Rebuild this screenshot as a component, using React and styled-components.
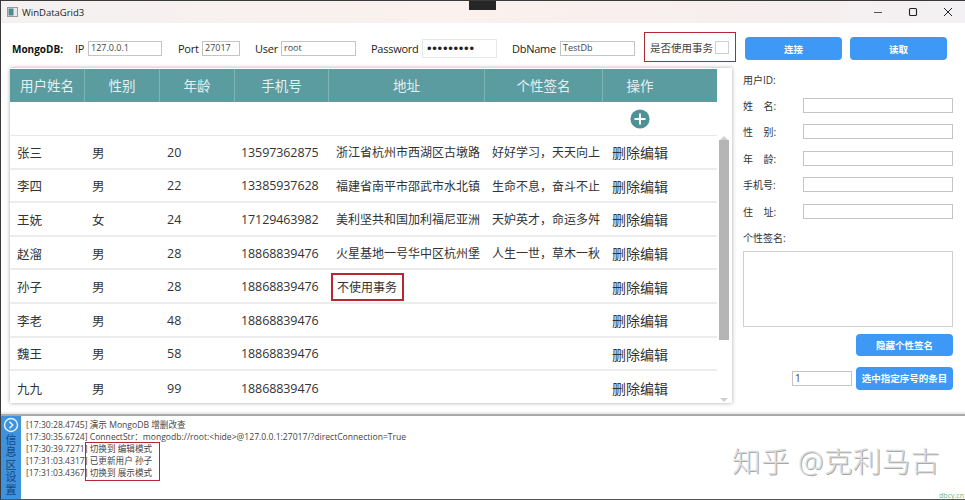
import React from "react";
import styled, { createGlobalStyle } from "styled-components";

const font = `"Open Sans", "Noto Sans CJK SC", "Noto Sans", sans-serif`;

const Global = createGlobalStyle`
  html, body { margin: 0; padding: 0; background: #fff; }
  * { box-sizing: border-box; }
  body { font-family: ${font}; color: #333; }
`;

const Win = styled.div`
  position: relative;
  width: 965px;
  height: 500px;
  overflow: hidden;
  background: #fff;
  border-top: 1px solid #3a3a3a;
  border-left: 1px solid #3a3a3a;
  border-bottom: 1px solid #555;
  display: flex;
  flex-direction: column;
`;
const Notch = styled.div`
  position: absolute;
  left: 468px;
  top: -1px;
  width: 27px;
  height: 10px;
  background: #262626;
`;
const TitleBar = styled.div`
  height: 22px;
  flex: none;
  display: flex;
  align-items: center;
  padding-left: 6px;
  background: linear-gradient(90deg, #f3f1f1, #fbf1ee 45%, #f7eeee 75%, #f3f1f3);
`;
const TitleText = styled.span`
  font-size: 9.5px;
  margin-left: 4px;
  color: #222;
`;
const Controls = styled.div`
  margin-left: auto;
  display: flex;
  align-items: center;
  gap: 25px;
  padding-right: 12px;
`;
const Toolbar = styled.div`
  height: 45px;
  flex: none;
  display: flex;
  align-items: center;
  padding: 6px 0 0 11px;
  font-size: 11px;
  letter-spacing: -0.25px;
  color: #222;
`;
const Brand = styled.b`
  font-size: 10px;
  font-weight: 700;
  letter-spacing: 0;
  width: 63px;
  color: #111;
`;
const Field = styled.label`
  display: flex;
  align-items: center;
  margin-right: ${p => p.$mr || 15}px;
`;
const FieldName = styled.span`
  width: ${p => p.$w}px;
  white-space: nowrap;
`;
const TextBox = styled.div`
  width: ${p => p.$w}px;
  height: ${p => p.$h || 15}px;
  border: 1px solid ${p => p.$soft ? "#e6e6e6" : "#c4c4c4"};
  background: #fff;
  font-size: ${p => p.$fs || 9}px;
  letter-spacing: 0;
  line-height: 12px;
  padding-left: 2px;
  color: #444;
  display: flex;
  align-items: ${p => p.$center ? "center" : "flex-start"};
  overflow: hidden;
`;
const Dots = styled.span`
  font-family: "Liberation Sans", sans-serif;
  font-size: 13px;
  letter-spacing: 0.75px;
  padding-left: 2px;
  color: #222;
`;
const TxBox = styled.div`
  width: 92px;
  height: 30px;
  margin: 0 9px 3px -6px;
  border: 1.5px solid #b02a30;
  display: flex;
  align-items: center;
  padding-left: 5px;
  gap: 2px;
  font-size: 10.5px;
  letter-spacing: 0;
  white-space: nowrap;
  color: #444;
`;
const Check = styled.span`
  width: 14px;
  height: 13px;
  flex: none;
  border: 1px solid #cfcfcf;
  background: #fff;
`;
const PrimaryBtn = styled.button`
  width: ${p => p.$w || 97}px;
  height: ${p => p.$h || 23}px;
  margin-right: ${p => p.$mr || 0}px;
  border: 0;
  padding: 0;
  border-radius: 4px;
  background: #3e98f5;
  color: #fff;
  font-family: ${font};
  font-size: 9.5px;
  font-weight: 700;
`;
const Main = styled.div`
  flex: none;
  height: 346px;
  display: flex;
  align-items: flex-start;
  padding-left: 9px;
`;
const Card = styled.div`
  width: 722px;
  height: 335px;
  display: flex;
  background: #fff;
  box-shadow: 0 0 4px rgba(0,0,0,.35);
  padding-top: 1px;
`;
const TableArea = styled.div`
  width: 707px;
`;
const columns = "75px 75px 75px 94px 156px 118px 114px";
const Head = styled.div`
  display: grid;
  grid-template-columns: ${columns};
  height: 33px;
  background: #5b9ca0;
`;
const HeadCell = styled.div`
  display: flex;
  align-items: center;
  justify-content: center;
  padding-bottom: 2px;
  font-size: 13.5px;
  color: #e4f0f0;
  border-right: 1px solid #7fb3b6;
  &:last-child { border-right: 0; padding-right: 40px; }
`;
const AddRow = styled.div`
  height: 34px;
  border-bottom: 1px solid #e8e8e8;
  display: grid;
  grid-template-columns: ${columns};
`;
const AddCell = styled.div`
  grid-column: 7;
  display: flex;
  justify-content: center;
  align-items: center;
  padding-right: 40px;
`;
const Row = styled.div`
  display: grid;
  grid-template-columns: ${columns};
  height: 33.6px;
  padding-top: 1px;
  border-bottom: 2px solid #ececec;
  align-items: center;
  &:last-child { border-bottom: 0; }
`;
const Cell = styled.div`
  padding-left: 7px;
  font-size: ${p => p.$fs || 12.5}px;
  white-space: nowrap;
  color: #333;
`;
const PhoneCell = styled(Cell)`
  padding-left: 6px;
  letter-spacing: -0.1px;
`;
const Flagged = styled.span`
  display: inline-block;
  margin: 0 0 0 -5px;
  padding: 0 5px 0 4px;
  height: 28px;
  line-height: 26px;
  border: 2px solid #b02a30;
`;
const OpCell = styled(Cell)`
  padding-left: 9px;
  font-size: 14px;
`;
const ScrollCol = styled.div`
  width: 14px;
  padding-top: 67px;
  display: flex;
  flex-direction: column;
  align-items: center;
`;
const ArrowUp = styled.div`
  width: 0; height: 0;
  border-left: 4px solid transparent;
  border-right: 4px solid transparent;
  border-bottom: 4px solid #cfcfcf;
`;
const ArrowDown = styled.div`
  width: 0; height: 0;
  margin-top: 58px;
  border-left: 4px solid transparent;
  border-right: 4px solid transparent;
  border-top: 4px solid #cfcfcf;
`;
const Thumb = styled.div`
  width: 10px;
  height: 200px;
  background: #b5b5b5;
`;
const Side = styled.div`
  width: 210px;
  margin-left: 11px;
  margin-top: -2px;
  display: flex;
  flex-direction: column;
  font-size: 10px;
  color: #333;
`;
const SideRow = styled.div`
  height: 26.4px;
  display: flex;
  align-items: center;
  justify-content: space-between;
`;
const SideLabel = styled.span`
  white-space: pre;
`;
const Memo = styled.div`
  height: 76px;
  border: 1px solid #cfcfcf;
`;
const RightAlign = styled.div`
  display: flex;
  justify-content: flex-end;
  align-items: center;
  gap: 4px;
  margin-top: ${p => p.$mt}px;
`;
const Log = styled.div`
  flex: none;
  height: 86px;
  display: flex;
  border-top: 2px solid #a9a9a9;
  box-shadow: 0 -2px 0 #ececec;
`;
const LogSide = styled.div`
  width: 20px;
  background: #3f92dd;
  display: flex;
  flex-direction: column;
  align-items: center;
  padding-top: 1px;
`;
const Vertical = styled.div`
  width: 14px;
  margin-top: 1px;
  font-size: 11px;
  line-height: 12.4px;
  color: #17467a;
  text-align: center;
`;
const LogBody = styled.div`
  padding: 3px 0 0 5px;
  font-size: 8.6px;
  line-height: 12.1px;
  color: #444;
  white-space: nowrap;
`;
const LogMark = styled.div`
  position: absolute;
  left: 84px;
  top: 441px;
  width: 75px;
  height: 39px;
  border: 1.5px solid #b02a30;
`;
const Watermark = styled.div`
  position: absolute;
  left: 731px;
  top: 441px;
  font-size: 28.5px;
  line-height: 38px;
  letter-spacing: 0.5px;
  white-space: nowrap;
  color: #dcdcdc;
  text-shadow: 1px 1px 0 #a9a9a9;
  font-weight: 300;
`;
const Stamp = styled.div`
  position: absolute;
  right: 1px;
  bottom: 0;
  font-size: 7px;
  line-height: 7px;
  color: #6dbb7a;
`;

const rows = [
  ["张三", "男", "20", "13597362875", "浙江省杭州市西湖区古墩路", "好好学习，天天向上"],
  ["李四", "男", "22", "13385937628", "福建省南平市邵武市水北镇", "生命不息，奋斗不止"],
  ["王妩", "女", "24", "17129463982", "美利坚共和国加利福尼亚洲", "天妒英才，命运多舛"],
  ["赵溜", "男", "28", "18868839476", "火星基地一号华中区杭州堡", "人生一世，草木一秋"],
  ["孙子", "男", "28", "18868839476", "不使用事务", ""],
  ["李老", "男", "48", "18868839476", "", ""],
  ["魏王", "男", "58", "18868839476", "", ""],
  ["九九", "男", "99", "18868839476", "", ""],
];
const heads = ["用户姓名", "性别", "年龄", "手机号", "地址", "个性签名", "操作"];
const sideFields = ["姓    名:", "性    别:", "年    龄:", "手机号:", "住    址:"];
const logs = [
  "[17:30:28.4745] 演示 MongoDB 增删改查",
  "[17:30:35.6724] ConnectStr：mongodb://root:<hide>@127.0.0.1:27017/?directConnection=True",
  "[17:30:39.7271] 切换到 编辑模式",
  "[17:31:03.4317] 已更新用户 孙子",
  "[17:31:03.4367] 切换到 展示模式",
];

const AppIcon = () => (
  <svg width="11" height="10" viewBox="0 0 11 10">
    <rect x="0.5" y="0.5" width="10" height="9" fill="#e8e8e8" stroke="#999" />
    <rect x="1.5" y="1.5" width="5" height="7" fill="#4d8a8c" />
  </svg>
);
const WinMin = () => (
  <svg width="10" height="10" viewBox="0 0 10 10"><path d="M1 5.5h8" stroke="#555" strokeWidth="1" /></svg>
);
const WinMax = () => (
  <svg width="10" height="10" viewBox="0 0 10 10"><rect x="1.5" y="1.5" width="7" height="7" rx="1" fill="none" stroke="#222" strokeWidth="1.1" /></svg>
);
const WinClose = () => (
  <svg width="10" height="10" viewBox="0 0 10 10"><path d="M1 1l8 8M9 1l-8 8" stroke="#222" strokeWidth="1" /></svg>
);
const PlusIcon = () => (
  <svg width="20" height="20" viewBox="0 0 20 20">
    <circle cx="10" cy="10" r="9.6" fill="#4f9195" />
    <path d="M10 4.5v11M4.5 10h11" stroke="#fff" strokeWidth="2" />
  </svg>
);
const ExpandIcon = () => (
  <svg width="16" height="16" viewBox="0 0 16 16">
    <circle cx="8" cy="8" r="6.5" fill="none" stroke="#e8f3fc" strokeWidth="1.4" />
    <path d="M6.5 4.8L9.7 8l-3.2 3.2" fill="none" stroke="#e8f3fc" strokeWidth="1.6" />
  </svg>
);

export default function App() {
  return (
    <Win>
      <Global />
      <Notch />
      <TitleBar>
        <AppIcon />
        <TitleText>WinDataGrid3</TitleText>
        <Controls>
          <WinMin />
          <WinMax />
          <WinClose />
        </Controls>
      </TitleBar>
      <Toolbar>
        <Brand>MongoDB:</Brand>
        <Field $mr={16}><FieldName $w={13}>IP</FieldName><TextBox $w={74}>127.0.0.1</TextBox></Field>
        <Field><FieldName $w={24}>Port</FieldName><TextBox $w={38}>27017</TextBox></Field>
        <Field><FieldName $w={26}>User</FieldName><TextBox $w={75}>root</TextBox></Field>
        <Field><FieldName $w={51}>Password</FieldName><TextBox $w={75} $h={19} $soft $center><Dots>•••••••••</Dots></TextBox></Field>
        <Field><FieldName $w={48}>DbName</FieldName><TextBox $w={75}>TestDb</TextBox></Field>
        <TxBox>是否使用事务<Check /></TxBox>
        <PrimaryBtn $mr={8}>连接</PrimaryBtn>
        <PrimaryBtn>读取</PrimaryBtn>
      </Toolbar>
      <Main>
        <Card>
          <TableArea>
            <Head>{heads.map(h => <HeadCell key={h}>{h}</HeadCell>)}</Head>
            <AddRow><AddCell><PlusIcon /></AddCell></AddRow>
            {rows.map(r => (
              <Row key={r[0]}>
                <Cell>{r[0]}</Cell>
                <Cell>{r[1]}</Cell>
                <Cell>{r[2]}</Cell>
                <PhoneCell>{r[3]}</PhoneCell>
                <Cell $fs={12}>{r[4] === "不使用事务" ? <Flagged>{r[4]}</Flagged> : r[4]}</Cell>
                <Cell $fs={12}>{r[5]}</Cell>
                <OpCell>删除编辑</OpCell>
              </Row>
            ))}
          </TableArea>
          <ScrollCol>
            <ArrowUp />
            <Thumb />
            <ArrowDown />
          </ScrollCol>
        </Card>
        <Side>
          <SideRow><SideLabel>用户ID:</SideLabel></SideRow>
          {sideFields.map(f => (
            <SideRow key={f}>
              <SideLabel>{f}</SideLabel>
              <TextBox $w={150} />
            </SideRow>
          ))}
          <SideRow><SideLabel>个性签名:</SideLabel></SideRow>
          <Memo />
          <RightAlign $mt={7}><PrimaryBtn $h={22}>隐藏个性签名</PrimaryBtn></RightAlign>
          <RightAlign $mt={11}>
            <TextBox $w={60} $fs={10}>1</TextBox>
            <PrimaryBtn>选中指定序号的条目</PrimaryBtn>
          </RightAlign>
        </Side>
      </Main>
      <Log>
        <LogSide>
          <ExpandIcon />
          <Vertical>信息区设置</Vertical>
        </LogSide>
        <LogBody>
          {logs.map(l => <div key={l}>{l}</div>)}
        </LogBody>
      </Log>
      <LogMark />
      <Watermark>知乎 @克利马古</Watermark>
      <Stamp>dbcy.cn</Stamp>
    </Win>
  );
}
